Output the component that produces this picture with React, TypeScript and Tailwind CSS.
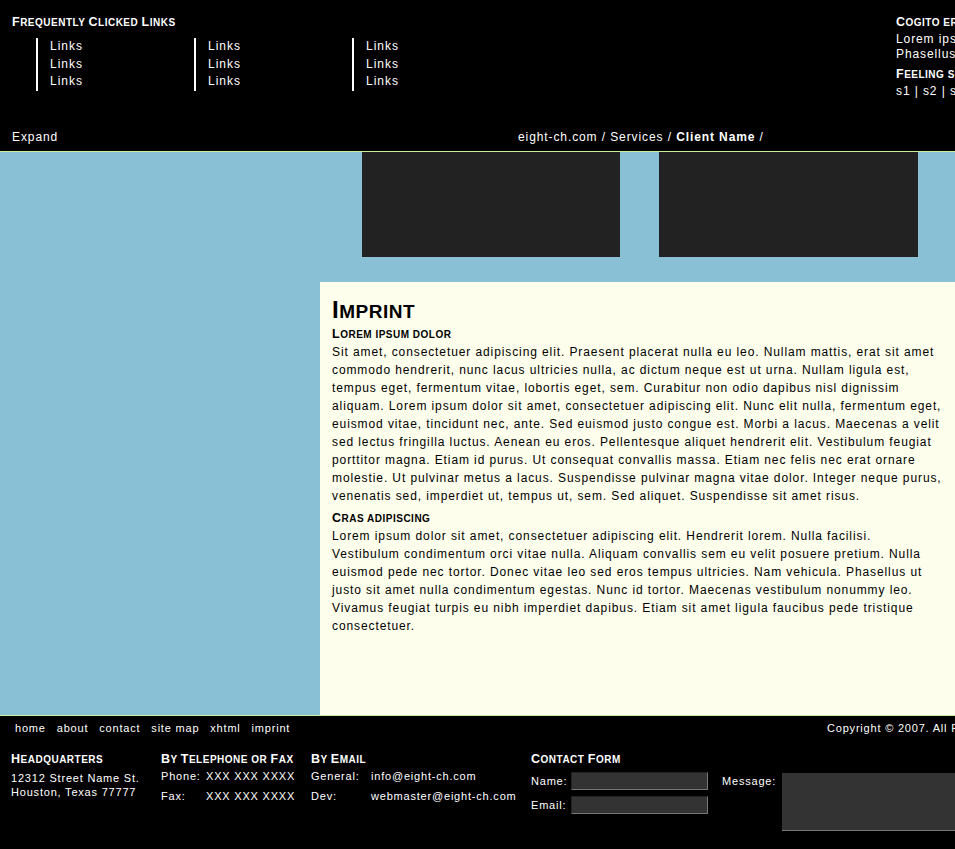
const SC = ({ text, big, small }: { text: string; big: string; small: string }) => {
  const parts: { t: string; up: boolean }[] = [];
  for (const ch of text) {
    const up = ch !== ch.toLowerCase();
    const last = parts[parts.length - 1];
    if (last && last.up === up) last.t += ch;
    else parts.push({ t: ch, up });
  }
  return (
    <>
      {parts.map((p, i) => (
        <span key={i} className={p.up ? big : small}>
          {p.up ? p.t : p.t.toUpperCase()}
        </span>
      ))}
    </>
  );
};

const Heading = ({ text, className = "" }: { text: string; className?: string }) => (
  <h2 className={`font-bold tracking-[0.5px] leading-[16px] ${className}`}>
    <SC text={text} big="text-[12.5px]" small="text-[10px]" />
  </h2>
);

const Links = () => (
  <ul className="border-l-2 border-white pl-3 w-[158px] leading-[17.5px]">
    <li>Links</li>
    <li>Links</li>
    <li>Links</li>
  </ul>
);

const Field = ({ label }: { label: string }) => (
  <div className="flex items-center">
    <span className="w-[40px]">{label}</span>
    <div className="w-[137px] h-[18px] bg-[#333] border border-[#222] border-b-[#777] border-r-[#777]" />
  </div>
);

export default function App() {
  return (
    <div className="w-[955px] h-[849px] overflow-hidden bg-black font-['Liberation_Sans',Arial,sans-serif] text-[12px] tracking-[0.9px]">
      <div className="w-[1100px]">
        {/* header */}
        <header className="h-[152px] flex flex-col justify-between text-white border-b border-[#c6ee9c]">
          <div className="flex">
            <div className="w-[896px] pl-3 pt-[14px]">
              <Heading text="Frequently Clicked Links" />
              <div className="flex pl-6 mt-[7px] tracking-[1px]">
                <Links />
                <Links />
                <Links />
              </div>
            </div>
            <div className="pt-[14px] leading-[15px]">
              <Heading text="Cogito ergo sum" />
              <p className="mt-[1px]">Lorem ipsum dolor sit amet.</p>
              <p>Phasellus ut justo.</p>
              <Heading text="Feeling social?" className="mt-[4px]" />
              <p className="mt-[1px]">s1 | s2 | s3</p>
            </div>
          </div>
          <div className="flex pl-3 pb-[6px] leading-[16px]">
            <span className="w-[506px]">Expand</span>
            <span>
              eight-ch.com / Services / <b>Client Name</b> /
            </span>
          </div>
        </header>

        {/* main */}
        <main className="flex bg-[#89c0d5] h-[563px]">
          <aside className="w-[320px]" />
          <div className="flex-1 flex flex-col">
            <div className="flex gap-[39px] pl-[42px] h-[130px]">
              <div className="w-[258px] h-[105px] bg-[#222]" />
              <div className="w-[259px] h-[105px] bg-[#222]" />
            </div>
            <article className="flex-1 bg-[#fefeec] text-black pl-3 pt-[16px]">
              <h1 className="font-bold leading-[24px] tracking-[0.5px]">
                <SC text="Imprint" big="text-[24px]" small="text-[19px]" />
              </h1>
              <h3 className="font-bold leading-[16px] tracking-[0.5px]">
                <SC text="Lorem ipsum dolor" big="text-[12.5px]" small="text-[10px]" />
              </h3>
              <p className="leading-[18px] w-[616px]">
                Sit amet, consectetuer adipiscing elit. Praesent placerat nulla eu leo. Nullam mattis, erat sit amet commodo hendrerit, nunc lacus ultricies nulla, ac dictum neque est ut urna. Nullam ligula est, tempus eget, fermentum vitae, lobortis eget, sem. Curabitur non odio dapibus nisl dignissim aliquam. Lorem ipsum dolor sit amet, consectetuer adipiscing elit. Nunc elit nulla, fermentum eget, euismod vitae, tincidunt nec, ante. Sed euismod justo congue est. Morbi a lacus. Maecenas a velit sed lectus fringilla luctus. Aenean eu eros. Pellentesque aliquet hendrerit elit. Vestibulum feugiat porttitor magna. Etiam id purus. Ut consequat convallis massa. Etiam nec felis nec erat ornare molestie. Ut pulvinar metus a lacus. Suspendisse pulvinar magna vitae dolor. Integer neque purus, venenatis sed, imperdiet ut, tempus ut, sem. Sed aliquet. Suspendisse sit amet risus.
              </p>
              <h3 className="font-bold leading-[16px] tracking-[0.5px] mt-[5px]">
                <SC text="Cras adipiscing" big="text-[12.5px]" small="text-[10px]" />
              </h3>
              <p className="leading-[18px] w-[607px]">
                Lorem ipsum dolor sit amet, consectetuer adipiscing elit. Hendrerit lorem. Nulla facilisi. Vestibulum condimentum orci vitae nulla. Aliquam convallis sem eu velit posuere pretium. Nulla euismod pede nec tortor. Donec vitae leo sed eros tempus ultricies. Nam vehicula. Phasellus ut justo sit amet nulla condimentum egestas. Nunc id tortor. Maecenas vestibulum nonummy leo. Vivamus feugiat turpis eu nibh imperdiet dapibus. Etiam sit amet ligula faucibus pede tristique consectetuer.
              </p>
            </article>
          </div>
        </main>

        {/* footer */}
        <footer className="border-t border-[#c6ee9c] text-white text-[11px] tracking-[0.8px] h-[134px]">
          <div className="flex pt-[4px] leading-[16px]">
            <nav className="w-[827px] pl-[15px] flex gap-[11px]">
              <span>home</span>
              <span>about</span>
              <span>contact</span>
              <span>site map</span>
              <span>xhtml</span>
              <span>imprint</span>
            </nav>
            <span>Copyright © 2007. All Rights Reserved.</span>
          </div>
          <div className="flex pl-[11px] mt-[15px]">
            <div className="w-[150px]">
              <Heading text="Headquarters" />
              <p className="mt-[3px] leading-[14px]">
                12312 Street Name St.
                <br />
                Houston, Texas 77777
              </p>
            </div>
            <div className="w-[150px]">
              <Heading text="By Telephone or Fax" />
              <div className="leading-[20px] mt-[-2px]">
                <div className="flex">
                  <span className="w-[45px]">Phone:</span>
                  <span>XXX XXX XXXX</span>
                </div>
                <div className="flex">
                  <span className="w-[45px]">Fax:</span>
                  <span>XXX XXX XXXX</span>
                </div>
              </div>
            </div>
            <div className="w-[220px]">
              <Heading text="By Email" />
              <div className="leading-[20px] mt-[-2px]">
                <div className="flex">
                  <span className="w-[60px]">General:</span>
                  <span>info@eight-ch.com</span>
                </div>
                <div className="flex">
                  <span className="w-[60px]">Dev:</span>
                  <span>webmaster@eight-ch.com</span>
                </div>
              </div>
            </div>
            <div>
              <Heading text="Contact Form" />
              <div className="flex mt-[4px]">
                <div className="flex flex-col gap-[6px]">
                  <Field label="Name:" />
                  <Field label="Email:" />
                </div>
                <div className="flex ml-[14px] mt-[1px]">
                  <span className="w-[60px]">Message:</span>
                  <div className="w-[200px] h-[58px] bg-[#333] border-b border-[#777]" />
                </div>
              </div>
            </div>
          </div>
        </footer>
      </div>
    </div>
  );
}
